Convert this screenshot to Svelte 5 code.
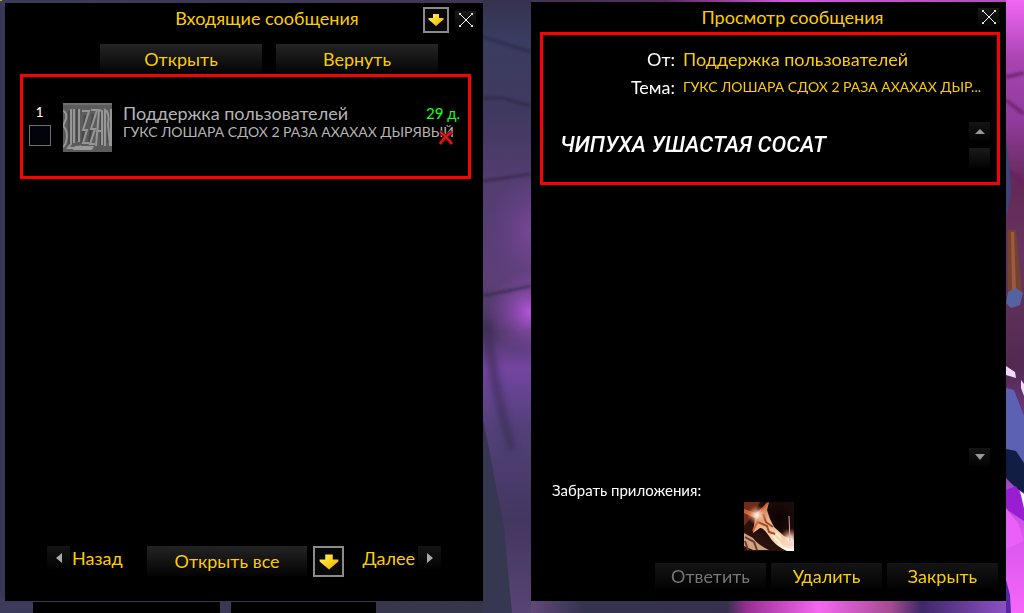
<script>
  let selected = $state(false);
  const subject = 'ГУКС ЛОШАРА СДОХ 2 РАЗА АХАХАХ ДЫРЯВЫЙ';
  const subjectShort = 'ГУКС ЛОШАРА СДОХ 2 РАЗА АХАХАХ ДЫР...';
</script>

{#snippet goldArrow(size)}
  <svg width={size} height={size} viewBox="0 0 16 16" aria-hidden="true">
    <defs>
      <linearGradient id="gold{size}" x1="0" y1="0" x2="1" y2="1">
        <stop offset="0" stop-color="#fff36a" />
        <stop offset="0.55" stop-color="#ffd21c" />
        <stop offset="1" stop-color="#e89a00" />
      </linearGradient>
    </defs>
    <path d="M5 2h6v4h4.500v1.500L8 14 .5 7.500V6H5z" fill="url(#gold{size})" />
  </svg>
{/snippet}

{#snippet cross()}
  <svg width="14" height="14" viewBox="0 0 14 14" aria-hidden="true" shape-rendering="crispEdges">
    <path d="M1 1l12 12M13 1L1 13" stroke="#fff" stroke-width="1.300" />
    <path d="M0 0h2v2H0zM12 0h2v2h-2zM0 12h2v2H0zM12 12h2v2h-2z" fill="#ddd" />
  </svg>
{/snippet}

<svg class="scene" viewBox="0 0 1024 613" preserveAspectRatio="none" aria-hidden="true">
  <defs>
    <linearGradient id="mid" x1="0" y1="0" x2="0" y2="1">
      <stop offset="0" stop-color="#35324e" />
      <stop offset=".06" stop-color="#393c60" />
      <stop offset=".18" stop-color="#40395f" />
      <stop offset=".3" stop-color="#533d71" />
      <stop offset=".45" stop-color="#5d3f78" />
      <stop offset=".54" stop-color="#4b3763" />
      <stop offset=".6" stop-color="#7345a0" />
      <stop offset=".7" stop-color="#514178" />
      <stop offset=".85" stop-color="#43365f" />
      <stop offset="1" stop-color="#584475" />
    </linearGradient>
    <radialGradient id="glow">
      <stop offset="0" stop-color="#b656dc" />
      <stop offset="1" stop-color="#8a48b0" stop-opacity="0" />
    </radialGradient>
    <linearGradient id="right" x1="0" y1="0" x2="0" y2="1">
      <stop offset="0" stop-color="#f266f5" />
      <stop offset=".1" stop-color="#a744b0" />
      <stop offset=".2" stop-color="#8e3c9b" />
      <stop offset=".3" stop-color="#642956" />
      <stop offset=".42" stop-color="#66345f" />
      <stop offset=".6" stop-color="#522951" />
      <stop offset=".75" stop-color="#7b48a5" />
      <stop offset=".86" stop-color="#d454eb" />
      <stop offset="1" stop-color="#f667fa" />
    </linearGradient>
    <linearGradient id="floor" x1="0" y1="0" x2="1" y2="0">
      <stop offset="0" stop-color="#3d3b5b" />
      <stop offset=".47" stop-color="#35354a" />
      <stop offset=".52" stop-color="#604879" />
      <stop offset=".57" stop-color="#34334d" />
      <stop offset=".71" stop-color="#36304c" />
      <stop offset=".73" stop-color="#9a2f96" />
      <stop offset=".8" stop-color="#f568f0" />
      <stop offset=".87" stop-color="#a44b92" />
      <stop offset=".9" stop-color="#3e2868" />
      <stop offset="1" stop-color="#9d58d8" />
    </linearGradient>
    <linearGradient id="sky" x1="0" y1="0" x2="1" y2="0">
      <stop offset="0" stop-color="#3b3a5b" />
      <stop offset=".5" stop-color="#413553" />
      <stop offset=".65" stop-color="#582c5e" />
      <stop offset=".77" stop-color="#d058df" />
      <stop offset="1" stop-color="#b24ab8" />
    </linearGradient>
    <filter id="soft" x="-1" y="-1" width="3" height="3"><feGaussianBlur stdDeviation="3" /></filter>
    <filter id="faint" x="-1" y="-1" width="3" height="3"><feGaussianBlur stdDeviation="1" /></filter>
  </defs>
  <path d="M0 0h1024v613H0z" fill="#383755" />
  <path d="M0 0h1024v6H0z" fill="url(#sky)" />
  <path d="M0 597h1024v16H0z" fill="url(#floor)" />
  <path d="M483 0h48v613h-48z" fill="url(#mid)" />
  <ellipse cx="531" cy="312" rx="44" ry="42" fill="url(#glow)" />
  <ellipse cx="531" cy="230" rx="40" ry="60" fill="url(#glow)" opacity=".35" />
  <path d="M483 37l48 15M483 98l20 0 28 8M483 181l48-7M483 296l48-10" stroke="#2d2743" stroke-width="3" fill="none" opacity=".6" filter="url(#faint)" />
  <path d="M486 320q8 70 26 130" stroke="#372c51" stroke-width="9" fill="none" opacity=".6" filter="url(#soft)" />
  <path d="M483 420l5 24 16 84 8 85h-29z" fill="#363750" />
  <path d="M1006 0h18v613h-18z" fill="url(#right)" />
  <path d="M1006 77l18-4M1006 100l18 14M1006 170l18 12" stroke="#6b1e69" stroke-width="4" opacity=".7" filter="url(#faint)" />
  <path d="M1006 140l4 30 1 25-5 25z" fill="#3e4378" />
  <path d="M1008 230h8l6 62-9 5-5-3z" fill="#74432f" />
  <path d="M1011 232l3 0 2 58-4 0z" fill="#9c5a40" />
  <path d="M1008 292l8-4 7 5-3 12-9 3-5-5z" fill="#56619f" />
  <path d="M1006 366l9 6 1 6-10-3zM1021 380l3 4v12l-3-8z" fill="#f2d8fc" />
  <path d="M1006 388l8 2 10 26v58l-18-20z" fill="#5c61b3" />
  <path d="M1006 449l10 2 8 12v30l-8-5-10-10z" fill="#111d42" />
  <path d="M1006 490l10-4 8 15v20l-18-12z" fill="#981fd1" />
  <path d="M1020 491l4 3v14z" fill="#fff" />
  <path d="M1006 508l12 15 6 18-18 8z" fill="#ea61f8" />
  <path d="M1006 580l4 15 1 18h-5z" fill="#5427a3" />
  <path d="M33 602h187v11H33zM231 602h145v11H231z" fill="#000" />
  <path d="M0 0h2v1H0z" fill="#d4a700" />
</svg>

<main>
  <section class="panel inbox" aria-label="Входящие сообщения">
    <header>
      <h1>Входящие сообщения</h1>
      <button class="framed" aria-label="Меню">{@render goldArrow(16)}</button>
      <button class="close" aria-label="Закрыть входящие">{@render cross()}</button>
    </header>
    <div class="tabs">
      <button class="btn">Открыть</button>
      <button class="btn">Вернуть</button>
    </div>
    <article class="marked letter">
      <label class="pick">
        <span>1</span>
        <input type="checkbox" bind:checked={selected} />
      </label>
      <svg class="stamp" viewBox="0 0 49 49" aria-hidden="true">
        <path d="M0 0h49v49H0z" fill="#5c5c5c" />
        <path d="M0 1h49" stroke="#6f6f6f" stroke-width="2" />
        <g fill="none" stroke="#484848" stroke-width="2">
          <path d="M6 8v34M14 6v32M22 12l-3 28M30 11l-4 28M38 8v34M45 10v30" />
        </g>
        <g fill="none" stroke="#969696" stroke-width="2">
          <path d="M0 8q4 1 3 8l-3 7q4 3 4 11-1 8-4 10" />
          <path d="M8 6v35l-3 4h9l4-2" />
          <path d="M11 6v34M16 6v33" />
          <path d="M19 8h7l-6 19h4l-4 13h6" />
          <path d="M28 7h6l-6 19h4l-5 15h5" />
          <path d="M33 43l3-36 3 1v34M35 28h4" />
          <path d="M42 43V7q5 2 3 15l2 21M48 6v37" />
        </g>
        <path d="M12 43h19l-2 4H10z" fill="#9a9a9a" />
      </svg>
      <div class="summary">
        <div class="line">
          <h2>Поддержка пользователей</h2>
          <time>29 д.</time>
        </div>
        <p>{subject}</p>
      </div>
      <button class="remove" aria-label="Удалить письмо">
        <svg width="16" height="16" viewBox="0 0 16 16" aria-hidden="true">
          <path d="M2 2q6 4 12 12M14 2Q7 6 2 14" stroke="#7c0909" stroke-width="4" fill="none" />
          <path d="M2 2q6 4 12 12M14 2Q7 6 2 14" stroke="#d71d1d" stroke-width="2" fill="none" />
        </svg>
      </button>
    </article>
    <footer class="pager">
      <button class="step" aria-label="Предыдущая страница">
        <svg width="8" height="12" viewBox="0 0 8 12" aria-hidden="true"><path d="M7 1v10L1 6z" fill="#aaa" /></svg>
      </button>
      <span class="prev">Назад</span>
      <button class="btn">Открыть все</button>
      <button class="framed big" aria-label="Параметры">{@render goldArrow(20)}</button>
      <span class="next">Далее</span>
      <button class="step" aria-label="Следующая страница">
        <svg width="8" height="12" viewBox="0 0 8 12" aria-hidden="true"><path d="M1 1v10l6-5z" fill="#aaa" /></svg>
      </button>
    </footer>
  </section>

  <section class="panel reader" aria-label="Просмотр сообщения">
    <header>
      <h1>Просмотр сообщения</h1>
      <button class="close" aria-label="Закрыть сообщение">{@render cross()}</button>
    </header>
    <article class="marked message">
      <dl>
        <dt>От:</dt>
        <dd>Поддержка пользователей</dd>
        <dt>Тема:</dt>
        <dd class="topic">{subjectShort}</dd>
      </dl>
      <div class="text">
        <p>ЧИПУХА УШАСТАЯ СОСАТ</p>
        <div class="rail">
          <button class="scroll" aria-label="Вверх">
            <svg width="10" height="6" viewBox="0 0 10 6" aria-hidden="true"><path d="M0 6h10L5 1z" fill="#999" /></svg>
          </button>
          <span class="thumb"></span>
        </div>
      </div>
    </article>
    <div class="rest">
      <button class="scroll" aria-label="Вниз">
        <svg width="10" height="6" viewBox="0 0 10 6" aria-hidden="true"><path d="M0 0h10L5 6z" fill="#999" /></svg>
      </button>
    </div>
    <p class="take">Забрать приложения:</p>
    <button class="item" aria-label="Вложение">
      <svg viewBox="0 0 50 49" aria-hidden="true">
        <defs>
          <radialGradient id="night" cx=".7" cy=".3" r=".6">
            <stop offset="0" stop-color="#0c0303" />
            <stop offset="1" stop-color="#2b110d" />
          </radialGradient>
          <linearGradient id="blade" x1=".2" y1="0" x2=".8" y2="1">
            <stop offset="0" stop-color="#b8572f" />
            <stop offset=".4" stop-color="#e8b78c" />
            <stop offset=".8" stop-color="#f5dcb9" />
            <stop offset="1" stop-color="#fff" />
          </linearGradient>
          <radialGradient id="flare">
            <stop offset="0" stop-color="#fff" />
            <stop offset=".3" stop-color="#ffd9c4" stop-opacity=".8" />
            <stop offset="1" stop-color="#e67a50" stop-opacity="0" />
          </radialGradient>
        </defs>
        <path d="M0 0h50v49H0z" fill="url(#night)" />
        <path d="M0 0h16L10 12 0 24z" fill="#6f2c18" />
        <path d="M0 7l12 4L25 0l-2 8 3 9 4 8 10 9 10 4v11h-7Q31 44 25 34q-6-9-9-8l-7 5 2-15L0 11z" fill="url(#blade)" />
        <path d="M0 31l9 5q5 7 16 12H9L0 44z" fill="#cda483" />
        <path d="M1 35l9 5 3 8M4 48l-3-9" stroke="#733a28" stroke-width="2" fill="none" />
        <path d="M24 1l-8 9-3 11-4 8M1 9l8 3" stroke="#d9622f" stroke-width="2" fill="none" />
        <path d="M14 20l9 4 2 6 6 2M19 12l3 8 7 5" stroke="#a8492c" stroke-width="2" fill="none" />
        <path d="M28 33l12 12M32 31l12 12" stroke="#ffefcf" stroke-width="2" />
        <circle cx="13" cy="13" r="10" fill="url(#flare)" />
        <circle cx="46" cy="37" r="11" fill="url(#flare)" />
        <path d="M45 14l1 25" stroke="#d7a5a0" stroke-width="1" />
      </svg>
    </button>
    <footer class="actions">
      <button class="btn" disabled>Ответить</button>
      <button class="btn">Удалить</button>
      <button class="btn">Закрыть</button>
    </footer>
  </section>
</main>

<style>
  :global(body) {
    margin: 0;
    background: #383755;
  }
  .scene {
    position: fixed;
    inset: 0;
    width: 100%;
    height: 100%;
  }
  main {
    position: relative;
    box-sizing: border-box;
    min-height: 100vh;
    display: grid;
    grid-template-columns: 478fr 475fr;
    gap: 48px;
    padding: 2px 18px 12px 5px;
    font-family: Lato, 'Open Sans', sans-serif;
    font-size: 18px;
    line-height: 24px;
    color: #fcce00;
  }
  h1, h2, p, dl, dd {
    margin: 0;
    font-size: 18px;
    font-weight: 400;
  }
  button {
    border: 0;
    padding: 0;
    margin: 0;
    font: inherit;
    color: inherit;
    background: none;
    display: flex;
    align-items: center;
    justify-content: center;
    flex: none;
  }
  .panel {
    background: #000;
    display: flex;
    flex-direction: column;
    min-width: 0;
  }
  .inbox {
    margin-top: 1px;
  }
  header {
    display: flex;
    align-items: center;
  }
  h1 {
    flex: 1;
    text-align: center;
  }
  .inbox header {
    gap: 6px;
    padding: 4px 7px 0 112px;
    height: 26px;
  }
  .inbox h1 {
    align-self: flex-start;
    line-height: 22px;
  }
  .reader header {
    height: 30px;
    padding: 0 7px 0 76px;
  }
  .framed {
    box-sizing: border-box;
    width: 26px;
    height: 26px;
    border: 2px solid #8b8b8b;
    background: #080808;
  }
  .big {
    width: 31px;
    height: 31px;
  }
  .close {
    width: 21px;
    height: 18px;
    background: linear-gradient(#191919, #050505);
  }
  .btn {
    height: 30px;
    background: linear-gradient(#242424, #030303);
    text-shadow: 1px 1px 0 #000;
  }
  .tabs {
    display: flex;
    gap: 14px;
    padding: 11px 45px 0 95px;
  }
  .tabs .btn {
    flex: 1;
  }
  .marked {
    box-sizing: border-box;
    border: 3px solid #f00;
  }
  .letter {
    position: relative;
    display: flex;
    margin: 0 12px 0 15px;
    padding: 26px 0 24px 5px;
  }
  .pick {
    width: 23px;
    display: flex;
    flex-direction: column;
    align-items: center;
    gap: 4px;
    color: #fff;
    font-size: 14px;
    line-height: 18px;
  }
  .pick input {
    appearance: none;
    box-sizing: border-box;
    width: 22px;
    height: 21px;
    margin: 0;
    border: 1px solid #6d6d6d;
    background: #03030c;
  }
  .pick input:checked {
    background: #ffd100;
  }
  .stamp {
    width: 49px;
    height: 49px;
    margin: 0 11px 0 12px;
    flex: none;
  }
  .summary {
    flex: 1;
    color: #b5b5b5;
    white-space: nowrap;
    min-width: 0;
  }
  .line {
    display: flex;
    justify-content: space-between;
    padding-right: 8px;
  }
  .line h2, .line time {
    line-height: 20px;
  }
  .line time {
    color: #1aff1a;
    font-size: 15px;
  }
  .summary p {
    font-size: 14px;
    line-height: 18px;
  }
  .remove {
    position: absolute;
    right: 14px;
    top: 53px;
  }
  .pager {
    margin-top: auto;
    display: flex;
    align-items: flex-start;
    padding: 0 42px 24px 42px;
  }
  .step {
    width: 23px;
    height: 23px;
    background: linear-gradient(#141414, #020202);
  }
  .prev {
    padding-left: 2px;
  }
  .pager .btn {
    flex: 1;
    margin: 0 6px 0 24px;
  }
  .next {
    padding: 0 3px 0 18px;
  }
  .message {
    margin: 0 6px 0 9px;
    padding: 12px 0 14px;
  }
  dl {
    display: grid;
    grid-template-columns: 132px 1fr;
    column-gap: 8px;
    row-gap: 4px;
    white-space: nowrap;
  }
  dt {
    color: #fff;
    text-align: right;
  }
  .topic {
    font-size: 14px;
  }
  .text {
    display: flex;
    justify-content: space-between;
    padding: 23px 7px 0 17px;
  }
  .text p {
    font-family: Roboto, sans-serif;
    font-size: 22px;
    font-weight: 500;
    font-style: italic;
    line-height: 46px;
    color: #fff;
  }
  .rail {
    display: flex;
    flex-direction: column;
    gap: 8px;
  }
  .scroll {
    width: 21px;
    height: 18px;
    background: linear-gradient(#141414, #030303);
  }
  .thumb {
    height: 20px;
    background: linear-gradient(#1a1a1a, #020202);
  }
  .rest {
    flex: 1;
    display: flex;
    justify-content: flex-end;
    align-items: flex-end;
    padding-right: 16px;
  }
  .take {
    padding: 14px 0 2px 21px;
    font-size: 15px;
    line-height: 20px;
    color: #fff;
  }
  .item {
    width: 50px;
    height: 49px;
    align-self: center;
  }
  .item svg {
    width: 50px;
    height: 49px;
  }
  .actions {
    display: flex;
    gap: 5px;
    margin-top: 12px;
    padding: 0 8px 12px 124px;
  }
  .actions .btn {
    flex: 1;
    height: 26px;
    background: linear-gradient(#151515, #020202);
  }
  .actions .btn:disabled {
    color: #777;
  }
</style>
